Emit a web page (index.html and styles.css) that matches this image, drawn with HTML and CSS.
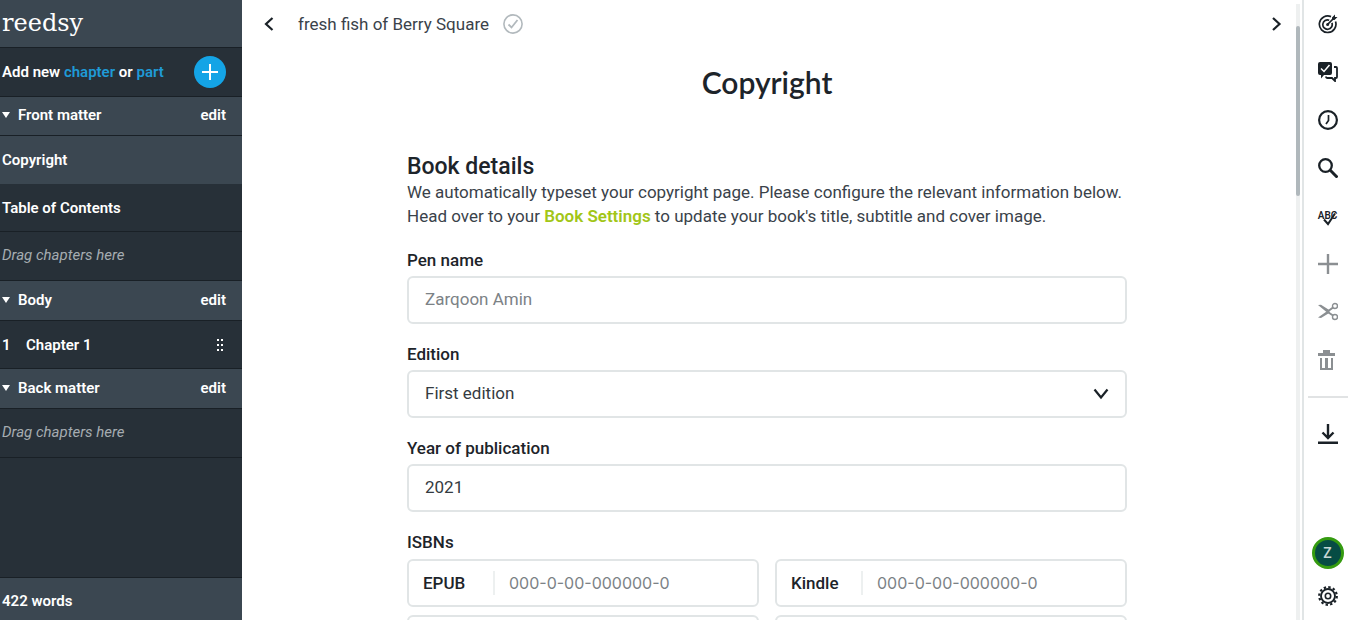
FILE: index.html
```html
<!DOCTYPE html>
<html lang="en">
<head>
<meta charset="utf-8">
<title>Copyright - Reedsy</title>
<meta name="viewport" content="width=device-width, initial-scale=1">
<link rel="stylesheet" href="styles.css">
</head>
<body>
<div class="app">
  <aside class="sidebar">
    <div class="brand">reedsy</div>
    <div class="row add-row">
      <p class="add-text">Add new <a href="#chapter">chapter</a> or <a href="#part">part</a></p>
      <button class="add-button" type="button" aria-label="Add">
        <svg width="16" height="16" viewBox="0 0 16 16"><path d="M8 0v16M0 8h16" stroke="currentColor" stroke-width="2"/></svg>
      </button>
    </div>
    <div class="row section section-first"><span class="caret"></span><span class="grow">Front matter</span><button class="edit" type="button">edit</button></div>
    <div class="row active">Copyright</div>
    <div class="row">Table of Contents</div>
    <div class="row drop">Drag chapters here</div>
    <div class="row section"><span class="caret"></span><span class="grow">Body</span><button class="edit" type="button">edit</button></div>
    <div class="row"><span class="number">1</span><span class="grow">Chapter 1</span>
      <svg class="grip" width="8" height="12" viewBox="0 0 8 12" fill="currentColor"><path d="M1 0h2v2H1zM5 0h2v2H5zM1 5h2v2H1zM5 5h2v2H5zM1 10h2v2H1zM5 10h2v2H5z"/></svg>
    </div>
    <div class="row section"><span class="caret"></span><span class="grow">Back matter</span><button class="edit" type="button">edit</button></div>
    <div class="row drop">Drag chapters here</div>
    <footer class="word-count">422 words</footer>
  </aside>

  <main class="main">
    <div class="page">
      <header class="topbar">
        <button class="nav" type="button" aria-label="Previous"><svg width="12" height="16" viewBox="0 0 12 16"><path d="M10.500 2L4 8l6.500 6" fill="none" stroke="currentColor" stroke-width="2.200"/></svg></button>
        <span class="book-title">fresh fish of Berry Square</span>
        <svg class="saved" width="20" height="20" viewBox="0 0 20 20" fill="none" stroke="currentColor"><circle cx="10" cy="10" r="9.100" stroke-width="1.600"/><path d="M5.500 10.500l3 3 6-7.500" stroke-width="1.800"/></svg>
        <button class="nav nav-next" type="button" aria-label="Next"><svg width="12" height="16" viewBox="0 0 12 16"><path d="M3 2l6.500 6L3 14" fill="none" stroke="currentColor" stroke-width="2.200"/></svg></button>
      </header>

      <form class="form">
        <h1>Copyright</h1>
        <h2>Book details</h2>
        <p class="intro">We automatically typeset your copyright page. Please configure the relevant information below. Head over to your <a href="#settings">Book Settings</a> to update your book's title, subtitle and cover image.</p>

        <div class="field">
          <label for="pen">Pen name</label>
          <input class="control" id="pen" type="text" placeholder="Zarqoon Amin">
        </div>
        <div class="field">
          <label for="edition">Edition</label>
          <div class="select-wrap">
            <select class="control" id="edition"><option>First edition</option><option>Second edition</option></select>
            <svg class="chevron" width="16" height="12" viewBox="0 0 16 12"><path d="M1.500 1.500L8 9.500l6.500-8" fill="none" stroke="currentColor" stroke-width="2.200"/></svg>
          </div>
        </div>
        <div class="field">
          <label for="year">Year of publication</label>
          <input class="control" id="year" type="text" value="2021">
        </div>
        <fieldset class="isbns">
          <legend>ISBNs</legend>
          <div class="isbn-grid">
            <div class="isbn"><label for="epub">EPUB</label><input id="epub" type="text" placeholder="000-0-00-000000-0"></div>
            <div class="isbn"><label for="kindle">Kindle</label><input id="kindle" type="text" placeholder="000-0-00-000000-0"></div>
            <div class="isbn"><input type="text" aria-label="ISBN"></div>
            <div class="isbn"><input type="text" aria-label="ISBN"></div>
          </div>
        </fieldset>
      </form>
    </div>
    <div class="track"><div class="thumb"></div></div>
  </main>

  <nav class="tools" aria-label="Tools">
    <button class="tool" type="button" aria-label="Goals"><svg viewBox="0 0 20 20" fill="none" stroke="currentColor" stroke-width="1.700"><path d="M13 2.600A8.300 8.300 0 1 0 17.500 7.500M11.200 6.200A4.700 4.700 0 1 0 13.900 8.900"/><circle cx="9.600" cy="10.400" r="1.500" fill="currentColor" stroke="none"/><path d="M9.500 10.500L16 4"/><path d="M14 3.500L17 .5v2.500h2.500l-3 3H14z" fill="currentColor" stroke="none"/></svg></button>
    <button class="tool" type="button" aria-label="Comments"><svg viewBox="0 0 20 20"><path d="M2 0h10a2 2 0 0 1 2 2v9a2 2 0 0 1-2 2H6l-3 3.500V13H2a2 2 0 0 1-2-2V2a2 2 0 0 1 2-2z" fill="currentColor"/><path d="M3 6.500l3 3L11.500 3" fill="none" stroke="#fff" stroke-width="1.500"/><path d="M16 5h2q1 0 1 1v9q0 1-1 1h-1v3l-3-3H9.500q-1.500 0-1.500-1.500" fill="none" stroke="currentColor" stroke-width="1.800"/></svg></button>
    <button class="tool" type="button" aria-label="History"><svg viewBox="0 0 20 20" fill="none" stroke="currentColor"><circle cx="10" cy="10" r="8.900" stroke-width="2.200"/><path d="M10.500 5v5.500L8 14" stroke-width="1.700"/></svg></button>
    <button class="tool" type="button" aria-label="Search"><svg viewBox="0 0 20 20" fill="none" stroke="currentColor"><circle cx="7.500" cy="7.500" r="6.300" stroke-width="2.300"/><path d="M12 12l7.500 7.500" stroke-width="3"/></svg></button>
    <button class="tool" type="button" aria-label="Spelling"><span class="spell">ABC<svg class="spell-mark" viewBox="0 0 20 16" fill="none" stroke="currentColor" stroke-width="2"><path d="M6 9.500l4 4.500L17 3.500"/></svg></span></button>
    <button class="tool muted" type="button" aria-label="Insert"><svg viewBox="0 0 20 20"><path d="M10 0v20M0 10h20" stroke="currentColor" stroke-width="2.400"/></svg></button>
    <button class="tool muted" type="button" aria-label="Split"><svg viewBox="0 0 20 20" fill="none" stroke="currentColor"><circle cx="17" cy="4" r="2.500" stroke-width="1.400"/><circle cx="17" cy="15" r="2.500" stroke-width="1.400"/><path d="M15 5.500L9 10M15 13.500L9 9.500" stroke-width="2"/><path d="M0 3l3-.2L12 8.500l-2 2.800zM0 15.500l10-7 2 2-9 5.500z" fill="currentColor" stroke="none"/></svg></button>
    <button class="tool muted" type="button" aria-label="Delete"><svg viewBox="0 0 20 20" fill="currentColor"><path d="M5 0h7v3h5v3H0V3h5zM2 8h2v10h3V8h3v10h3V8h2v12H2z"/></svg></button>
    <hr class="divider">
    <button class="tool" type="button" aria-label="Export"><svg viewBox="0 0 20 20" fill="none" stroke="currentColor" stroke-width="2.400"><path d="M10 0v14M4.500 8.500L10 14l5.500-5.500M0 18.800h20"/></svg></button>
    <div class="account">
      <button class="avatar" type="button">Z</button>
      <button class="tool" type="button" aria-label="Settings"><svg viewBox="0 0 20 20" fill="none" stroke="currentColor"><circle cx="10" cy="10" r="7" stroke-width="1.900"/><circle cx="10" cy="10" r="2.700" stroke-width="1.600"/><circle cx="10" cy="10" r="8.800" stroke-width="2.200" stroke-dasharray="2.400 2.207"/></svg></button>
    </div>
  </nav>
</div>
</body>
</html>
```

FILE: styles.css
```css
* { box-sizing: border-box; }

body {
  margin: 0;
  background: #fff;
  color: #3a424a;
  font: 17px/24px Roboto, "Liberation Sans", sans-serif;
}

button, input, select { font: inherit; color: inherit; }
button { padding: 0; border: 0; background: none; cursor: pointer; }
svg { display: block; }

.app {
  display: grid;
  grid-template-columns: 242px minmax(0, 1fr) 49px;
  height: 100vh;
  overflow: hidden;
}

/* Sidebar */
.sidebar {
  display: flex;
  flex-direction: column;
  background: #273038;
  color: #fff;
  font-size: 15px;
  font-weight: 600;
}

.brand {
  height: 48px;
  padding-left: 2px;
  border-bottom: 1px solid #192026;
  background: #3b4751;
  font: 24px/46px "DejaVu Serif", serif;
}

.row {
  display: flex;
  align-items: center;
  height: 48px;
  padding: 0 16px 0 2px;
  border-bottom: 1px solid #192026;
}

.grow { flex: 1; }
.add-row { height: 49px; justify-content: space-between; }
.add-text { margin: 0; }
.add-text a { color: #1f9ad6; text-decoration: none; }

.add-button {
  display: grid;
  place-items: center;
  width: 32px;
  height: 32px;
  border-radius: 50%;
  background: #14a4e6;
  color: #fff;
}

.section { height: 40px; padding-bottom: 2px; background: #3b4751; }
.section-first { height: 39px; }
.active { border-color: #3b4751; background: #3b4751; }
.edit { font-weight: 600; }

.drop {
  height: 49px;
  padding-bottom: 2px;
  color: #a5acb1;
  font-weight: 400;
  font-style: italic;
}

.caret {
  margin-right: 8px;
  border: 4px solid transparent;
  border-top: 6px solid #fff;
  border-bottom: 0;
}

.number { width: 24px; }
.grip { margin-right: 2px; }

.word-count {
  display: flex;
  align-items: center;
  height: 43px;
  margin-top: auto;
  padding: 4px 2px 0;
  border-top: 1px solid #192026;
  background: #3b4751;
}

/* Page */
.main { display: flex; min-height: 0; }
.page { flex: 1; min-width: 0; overflow: hidden; }

.topbar {
  display: flex;
  align-items: center;
  height: 48px;
  padding: 0 10px 0 20px;
}

.nav { color: #1a2127; }
.nav-next { margin-left: auto; }
.book-title { margin: 0 14px 0 24px; }
.saved { color: #b2b9bd; }

.form {
  width: 100%;
  max-width: 720px;
  margin: 0 auto;
  color: #3a424a;
}

h1 {
  margin: 14px 0 51px;
  color: #1d242a;
  font: 600 30px/40px Lato, sans-serif;
  text-align: center;
}

h2 {
  margin: 0 0 1px;
  padding-top: 2px;
  line-height: 24px;
  color: #1d242a;
  font-size: 23px;
  font-weight: 500;
}

.intro { margin: 0 0 20px; }
.intro a { color: #a2c617; font-weight: 600; text-decoration: none; }

.field { margin-bottom: 18px; }

.field label, legend {
  display: block;
  padding: 0;
  color: #1d242a;
  font-weight: 500;
  line-height: 24px;
  margin-bottom: 4px;
}

.control {
  display: block;
  width: 100%;
  height: 48px;
  padding: 0 16px 2px;
  border: 2px solid #e1e5e6;
  border-radius: 6px;
  background: #fff;
  color: #343b41;
  appearance: none;
}

::placeholder { color: #7c8286; opacity: 1; }

.select-wrap { position: relative; }
.chevron {
  position: absolute;
  top: 18px;
  right: 18px;
  color: #1a2127;
  pointer-events: none;
}

.isbns { min-width: 0; margin: 0; padding: 0; border: 0; }
.isbns legend { margin-bottom: 5px; }
.isbn-grid {
  display: grid;
  grid-template-columns: repeat(2, minmax(0, 1fr));
  gap: 8px 16px;
}

.isbn {
  display: flex;
  align-items: center;
  height: 48px;
  padding: 0 14px;
  border: 2px solid #e1e5e6;
  border-radius: 6px;
}

.isbn label {
  flex: none;
  width: 72px;
  color: #1d242a;
  font-weight: 500;
  border-right: 2px solid #edf0f0;
}

.isbn input {
  flex: 1;
  width: 100%;
  min-width: 0;
  padding: 0 14px;
  border: 0;
  background: none;
  font-family: Inter, sans-serif;
  font-size: 16px;
}

.track {
  width: 4px;
  margin: 4px 2px 0 4px;
  padding-top: 22px;
  background: #eef0f0;
}

.thumb { height: 170px; border-radius: 2px; background: #b0b8bc; }

/* Tools */
.tools {
  display: flex;
  flex-direction: column;
  align-items: center;
  border-left: 2px solid #e1e5e6;
  color: #1a2127;
}

.tool {
  display: grid;
  flex: none;
  place-items: center;
  width: 100%;
  height: 48px;
}

.tool svg { width: 20px; height: 20px; }
.muted { color: #8b8f92; }

.spell { position: relative; font: 600 10px/16px Roboto, sans-serif; }
.tool .spell-mark { position: absolute; top: 2px; left: 0; width: 20px; height: 16px; }

.divider {
  width: 40px;
  margin: 12px 0;
  border: 0;
  border-top: 2px solid #e1e3e4;
}

.account { width: 100%; margin-top: auto; text-align: center; }

.avatar {
  width: 32px;
  height: 32px;
  margin-bottom: 3px;
  border: 3px solid #359b10;
  border-radius: 50%;
  background: #064c44;
  color: #c5d6d3;
  font-size: 14px;
  font-weight: 500;
}
```
